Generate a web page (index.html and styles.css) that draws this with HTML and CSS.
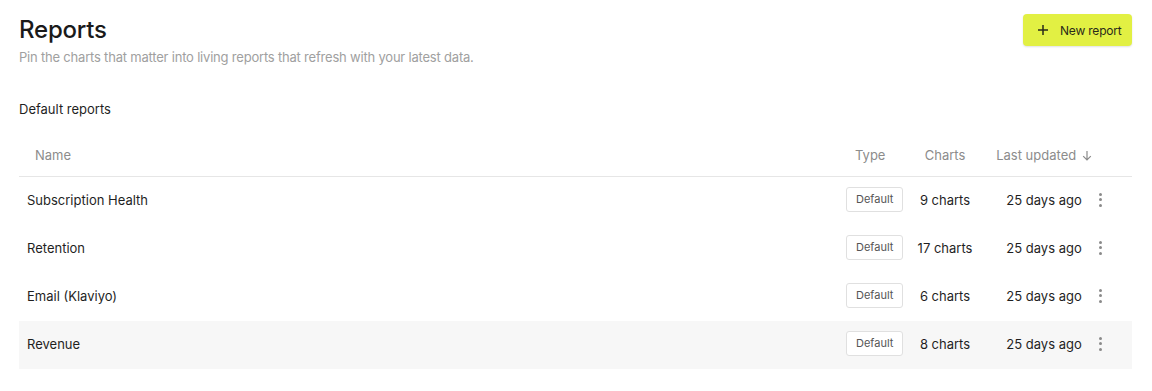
FILE: index.html
```html
<!DOCTYPE html>
<html lang="en">
<head>
<meta charset="utf-8">
<title>Reports</title>
<link rel="stylesheet" href="styles.css">
</head>
<body>
<main class="page">
  <header class="page-head">
    <div class="titles">
      <h1 class="title">Reports</h1>
      <p class="subtitle">Pin the charts that matter into living reports that refresh with your latest data.</p>
    </div>
    <button class="btn-new" type="button">
      <svg class="plus" width="12" height="12" viewBox="0 0 12 12"><path d="M6 1v10M1 6h10" stroke="#2a2a1a" stroke-width="1.5" fill="none"/></svg>
      <span>New report</span>
    </button>
  </header>

  <h2 class="section-title">Default reports</h2>

  <div class="table">
    <div class="row head">
      <div class="cell name">Name</div>
      <div class="cell type">Type</div>
      <div class="cell charts">Charts</div>
      <div class="cell updated">Last updated
        <svg class="arrow" width="10" height="11" viewBox="0 0 10 11"><path d="M5 1v9M1.2 6.2L5 10l3.8-3.8" stroke="#8a8a8a" stroke-width="1.2" fill="none"/></svg>
      </div>
      <div class="cell menu"></div>
    </div>

    <div class="row">
      <div class="cell name">Subscription Health</div>
      <div class="cell type"><span class="badge">Default</span></div>
      <div class="cell charts">9 charts</div>
      <div class="cell updated">25 days ago</div>
      <div class="cell menu"><span class="dots"><i></i><i></i><i></i></span></div>
    </div>
    <div class="row">
      <div class="cell name">Retention</div>
      <div class="cell type"><span class="badge">Default</span></div>
      <div class="cell charts">17 charts</div>
      <div class="cell updated">25 days ago</div>
      <div class="cell menu"><span class="dots"><i></i><i></i><i></i></span></div>
    </div>
    <div class="row">
      <div class="cell name">Email (Klaviyo)</div>
      <div class="cell type"><span class="badge">Default</span></div>
      <div class="cell charts">6 charts</div>
      <div class="cell updated">25 days ago</div>
      <div class="cell menu"><span class="dots"><i></i><i></i><i></i></span></div>
    </div>
    <div class="row hover">
      <div class="cell name">Revenue</div>
      <div class="cell type"><span class="badge">Default</span></div>
      <div class="cell charts">8 charts</div>
      <div class="cell updated">25 days ago</div>
      <div class="cell menu"><span class="dots"><i></i><i></i><i></i></span></div>
    </div>
  </div>
</main>
</body>
</html>
```

FILE: styles.css
```css
* { box-sizing: border-box; }
html, body { margin: 0; background: #fff; }
body {
  font-family: "Inter", "Roboto", "Liberation Sans", sans-serif;
  color: #1f1f1f;
  -webkit-font-smoothing: antialiased;
}
.page {
  width: 1113px;
  margin-left: 19px;
  padding-top: 14px;
}
.page-head {
  display: flex;
  justify-content: space-between;
  align-items: flex-start;
}
.title {
  margin: 0;
  font-size: 24px;
  font-weight: 500;
  line-height: 32px;
  letter-spacing: -0.2px;
  color: #1a1a1a;
}
.subtitle {
  margin: 2px 0 0;
  font-size: 13px;
  line-height: 18px;
  color: #a0a0a0;
  letter-spacing: -0.2px;
}
.btn-new {
  display: flex;
  align-items: center;
  gap: 11px;
  height: 32px;
  width: 109px;
  padding: 0 0 0 14px;
  border: none;
  border-radius: 4px;
  background: #e2f043;
  box-shadow: 0 1px 2px rgba(0,0,0,0.12);
  font-family: inherit;
  font-size: 12px;
  letter-spacing: -0.2px;
  color: #2a2a1a;
  cursor: pointer;
}
.section-title {
  margin: 34px 0 0;
  font-size: 13px;
  font-weight: 400;
  line-height: 18px;
  color: #1f1f1f;
}
.table { margin-top: 18px; }
.row {
  display: grid;
  grid-template-columns: 1fr 66px 78px 110px 12px;
  padding-right: 26px;
  padding-bottom: 3px;
  height: 48px;
  align-items: center;
  font-size: 13px;
}
.row.head {
  height: 41px;
  border-bottom: 1px solid #e6e6e6;
  color: #8c8c8c;
  padding-bottom: 2px;
}
.row.hover { background: #f7f7f7; }
.cell.name { padding-left: 8px; }
.row.head .cell.name { padding-left: 16px; }
.cell.type { text-align: left; padding-left: 6px; }
.row.head .cell.type { padding-left: 15px; }
.cell.charts { text-align: center; }
.cell.updated { text-align: center; padding-left: 10px; }
.arrow { vertical-align: -1px; margin-left: 2px; }
.badge {
  display: inline-block;
  height: 25px;
  line-height: 23px;
  padding: 0 9px;
  border: 1px solid #e0e0e0;
  border-radius: 3px;
  font-size: 11px;
  color: #555;
  background: #fff;
}
.dots {
  display: flex;
  flex-direction: column;
  align-items: center;
  gap: 2.5px;
}
.dots i {
  display: block;
  width: 3px;
  height: 3px;
  border-radius: 50%;
  background: #8a8a8a;
}
```
